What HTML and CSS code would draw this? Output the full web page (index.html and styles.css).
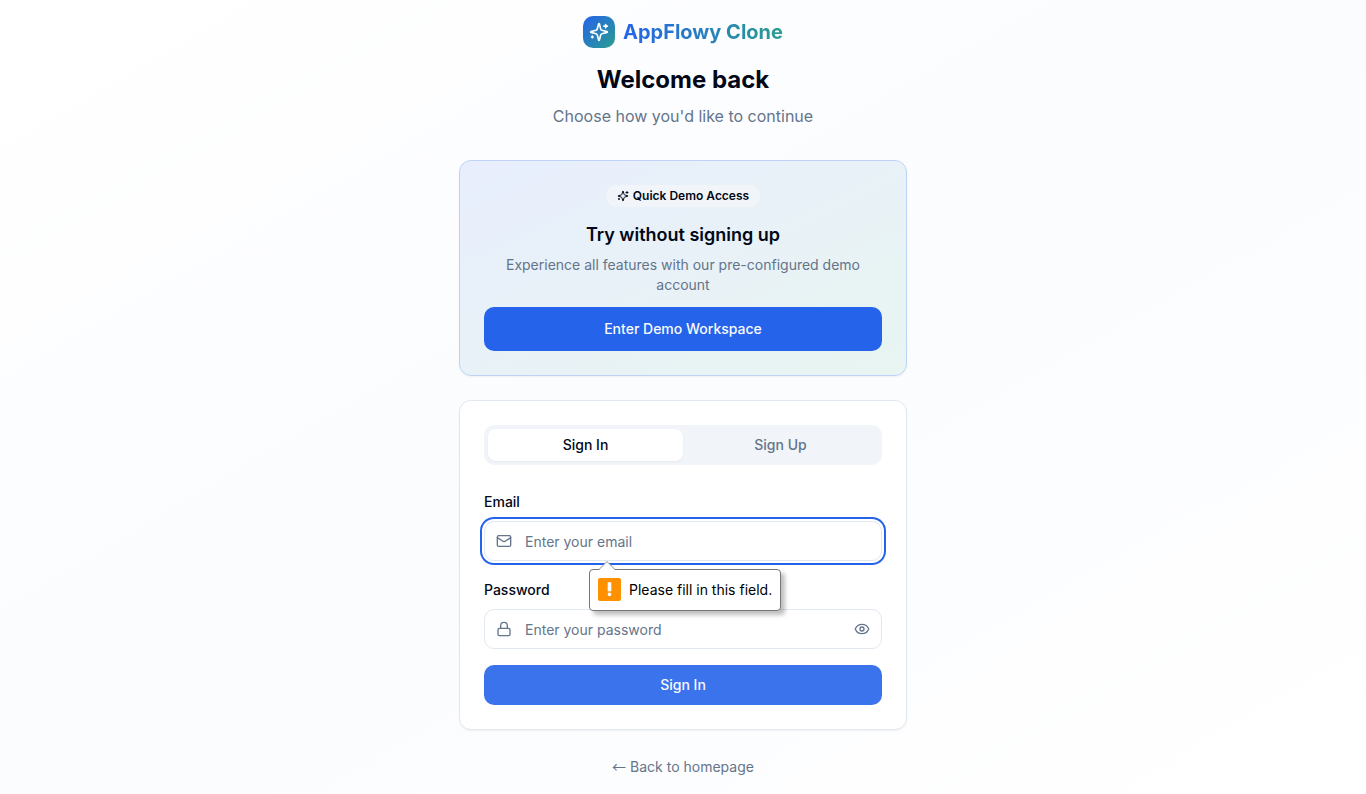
FILE: index.html
```html
<!DOCTYPE html>
<html lang="en">
<head>
  <meta charset="utf-8">
  <meta name="viewport" content="width=device-width, initial-scale=1">
  <title>Sign in - AppFlowy Clone</title>
  <link rel="stylesheet" href="styles.css">
</head>
<body>
  <svg class="sprite" aria-hidden="true">
    <symbol id="sparkles" viewBox="0 0 24 24">
      <path d="M9.937 15.5A2 2 0 0 0 8.5 14.063l-6.135-1.582a.5.5 0 0 1 0-.962L8.5 9.936A2 2 0 0 0 9.937 8.5l1.582-6.135a.5.5 0 0 1 .963 0L14.063 8.5A2 2 0 0 0 15.5 9.937l6.135 1.581a.5.5 0 0 1 0 .964L15.5 14.063a2 2 0 0 0-1.437 1.437l-1.582 6.135a.5.5 0 0 1-.963 0z"/>
      <path d="M20 3v4M22 5h-4M4 17v2M5 18H3"/>
    </symbol>
  </svg>
  <main class="page">
    <div class="container">
      <header class="header">
        <div class="brand">
          <span class="brand-mark"><svg class="icon icon-md" aria-hidden="true"><use href="#sparkles"/></svg></span>
          <span class="brand-name">AppFlowy Clone</span>
        </div>
        <h1 class="title">Welcome back</h1>
        <p class="subtitle">Choose how you'd like to continue</p>
      </header>

      <section class="card demo">
        <span class="badge"><svg class="icon icon-xs" aria-hidden="true"><use href="#sparkles"/></svg>Quick Demo Access</span>
        <h2 class="demo-title">Try without signing up</h2>
        <p class="demo-text">Experience all features with our pre-configured demo account</p>
        <button class="button button-lg" type="button">Enter Demo Workspace</button>
      </section>

      <section class="card">
        <div class="tabs" role="tablist">
          <button class="tab tab-active" type="button" role="tab" aria-selected="true">Sign In</button>
          <button class="tab" type="button" role="tab" aria-selected="false">Sign Up</button>
        </div>
        <form class="form" novalidate>
          <div class="field">
            <label class="label" for="email">Email</label>
            <div class="control control-focus">
              <svg class="icon" viewBox="0 0 24 24" aria-hidden="true"><rect width="20" height="16" x="2" y="4" rx="2"/><path d="m22 7-8.97 5.7a1.94 1.94 0 0 1-2.06 0L2 7"/></svg>
              <input class="input" id="email" type="email" placeholder="Enter your email" required>
              <div class="tooltip" role="alert">
                <svg class="tooltip-arrow" viewBox="0 0 16 9" aria-hidden="true"><path class="arrow-fill" d="M0 9 8 0l8 9z"/><path class="arrow-line" d="M0 8.500 8 .5l8 8"/></svg>
                <svg class="tooltip-icon" viewBox="0 0 23 23" aria-hidden="true"><rect class="warn" width="23" height="23" rx="2"/><path class="mark" d="M9.700 4.300h3.600v9h-3.600z"/><circle class="mark" cx="11.500" cy="16.400" r="1.800"/></svg>
                <span>Please fill in this field.</span>
              </div>
            </div>
          </div>
          <div class="field">
            <label class="label" for="password">Password</label>
            <div class="control">
              <svg class="icon" viewBox="0 0 24 24" aria-hidden="true"><rect width="18" height="11" x="3" y="11" rx="2"/><path d="M7 11V7a5 5 0 0 1 10 0v4"/></svg>
              <input class="input" id="password" type="password" placeholder="Enter your password" required>
              <button class="reveal" type="button" aria-label="Show password">
                <svg class="icon" viewBox="0 0 24 24" aria-hidden="true"><path d="M2.062 12.348a1 1 0 0 1 0-.696 10.750 10.750 0 0 1 19.876 0 1 1 0 0 1 0 .696 10.750 10.750 0 0 1-19.876 0"/><circle cx="12" cy="12" r="3"/></svg>
              </button>
            </div>
          </div>
          <button class="button button-hover" type="submit">Sign In</button>
        </form>
      </section>

      <a class="back" href="#"><span class="back-arrow">←</span> Back to homepage</a>
    </div>
  </main>
</body>
</html>
```
FILE: styles.css
```css
* { box-sizing: border-box; }

body {
  margin: 0;
  color: #020817;
  font-family: Inter, "Liberation Sans", sans-serif;
  font-size: 14px;
  line-height: 20px;
}

h1, h2, p { margin: 0; }
button, input { font: inherit; }
button { border: 0; cursor: pointer; }

.sprite { position: absolute; width: 0; height: 0; }

.icon {
  flex: none;
  width: 16px;
  height: 16px;
  fill: none;
  stroke: currentColor;
  stroke-width: 2;
  stroke-linecap: round;
  stroke-linejoin: round;
}
.icon-md { width: 20px; height: 20px; }
.icon-xs { width: 12px; height: 12px; }

.page {
  display: flex;
  align-items: center;
  justify-content: center;
  min-height: 100vh;
  padding: 16px;
  background: linear-gradient(to bottom right, #fff, #fbfcfe, #fff);
}

.container {
  display: flex;
  flex-direction: column;
  gap: 24px;
  width: 100%;
  max-width: 448px;
}

.header { padding-bottom: 8px; text-align: center; }

.brand {
  display: flex;
  align-items: center;
  justify-content: center;
  gap: 8px;
  margin-bottom: 16px;
}
.brand-mark {
  display: flex;
  align-items: center;
  justify-content: center;
  width: 32px;
  height: 32px;
  border-radius: 10px;
  color: #fff;
  background: linear-gradient(to bottom right, #2563eb, #2a9d8f);
}
.brand-name {
  color: transparent;
  background: linear-gradient(to right, #2563eb, #2a9d8f);
  background-clip: text;
  font-size: 20px;
  font-weight: 700;
  line-height: 28px;
}

.title { margin-bottom: 8px; font-size: 24px; font-weight: 700; line-height: 32px; }
.subtitle { color: #64748b; font-size: 16px; line-height: 24px; }

.card {
  padding: 24px;
  border: 1px solid #e2e8f0;
  border-radius: 12px;
  background: #fff;
  box-shadow: 0 1px 2px rgb(0 0 0 / 5%);
}

.demo {
  display: flex;
  flex-direction: column;
  align-items: center;
  border-color: #bfd3f8;
  background: linear-gradient(to bottom right, #e8eefd, #e8f5f1);
  text-align: center;
}
.badge {
  display: flex;
  align-items: center;
  gap: 4px;
  margin-bottom: 14px;
  padding: 3px 11px;
  border-radius: 11px;
  background: #f1f5f9;
  font-size: 12px;
  font-weight: 600;
  line-height: 16px;
}
.demo-title { margin-bottom: 6px; font-size: 18px; font-weight: 600; line-height: 28px; }
.demo-text { margin-bottom: 12px; color: #64748b; }

.button {
  width: 100%;
  height: 40px;
  border-radius: 10px;
  color: #f8fafc;
  background: #2563eb;
  font-weight: 500;
}
.button-lg { height: 44px; }
.button-hover { background: #3b73ed; }

.tabs {
  display: grid;
  grid-template-columns: 1fr 1fr;
  margin-bottom: 24px;
  padding: 4px;
  border-radius: 10px;
  background: #f1f5f9;
}
.tab {
  padding: 6px 12px;
  border-radius: 8px;
  color: #64748b;
  background: transparent;
  font-weight: 500;
}
.tab-active { color: #020817; background: #fff; box-shadow: 0 1px 2px rgb(0 0 0 / 5%); }

.form { display: flex; flex-direction: column; gap: 16px; }
.label { display: block; margin-bottom: 6px; font-weight: 500; line-height: 26px; }

.control {
  position: relative;
  display: flex;
  align-items: center;
  gap: 12px;
  height: 40px;
  padding: 0 11px;
  border: 1px solid #e2e8f0;
  border-radius: 10px;
  color: #64748b;
  background: #fff;
}
.control-focus { box-shadow: 0 0 0 2px #fff, 0 0 0 4px #2563eb; }

.input {
  flex: 1;
  min-width: 0;
  padding: 2px 1px 0;
  border: 0;
  outline: 0;
  color: #020817;
  background: transparent;
}
.input::placeholder { color: #64748b; opacity: 1; }

.reveal { display: flex; padding: 0; color: inherit; background: transparent; }

.tooltip {
  position: absolute;
  z-index: 1;
  top: 47px;
  left: 104px;
  display: flex;
  align-items: center;
  gap: 8px;
  padding: 8px 8px 9px;
  border: 1px solid #767676;
  border-radius: 4px;
  color: #000;
  background: #fff;
  box-shadow: 4px 4px 4px rgb(0 0 0 / 25%);
  white-space: nowrap;
}
.tooltip-icon { width: 23px; height: 23px; }
.tooltip-arrow { position: absolute; top: -9px; left: 9px; width: 16px; height: 9px; }
.arrow-fill { fill: #fff; }
.arrow-line { fill: none; stroke: #8c8c8c; }
.warn { fill: #ff9100; }
.mark { fill: #fff; }

.back {
  align-self: center;
  padding-top: 2px;
  color: #64748b;
  line-height: 22px;
  text-decoration: none;
}
.back-arrow { font-family: "Noto Sans CJK JP", sans-serif; line-height: 16px; }
```
